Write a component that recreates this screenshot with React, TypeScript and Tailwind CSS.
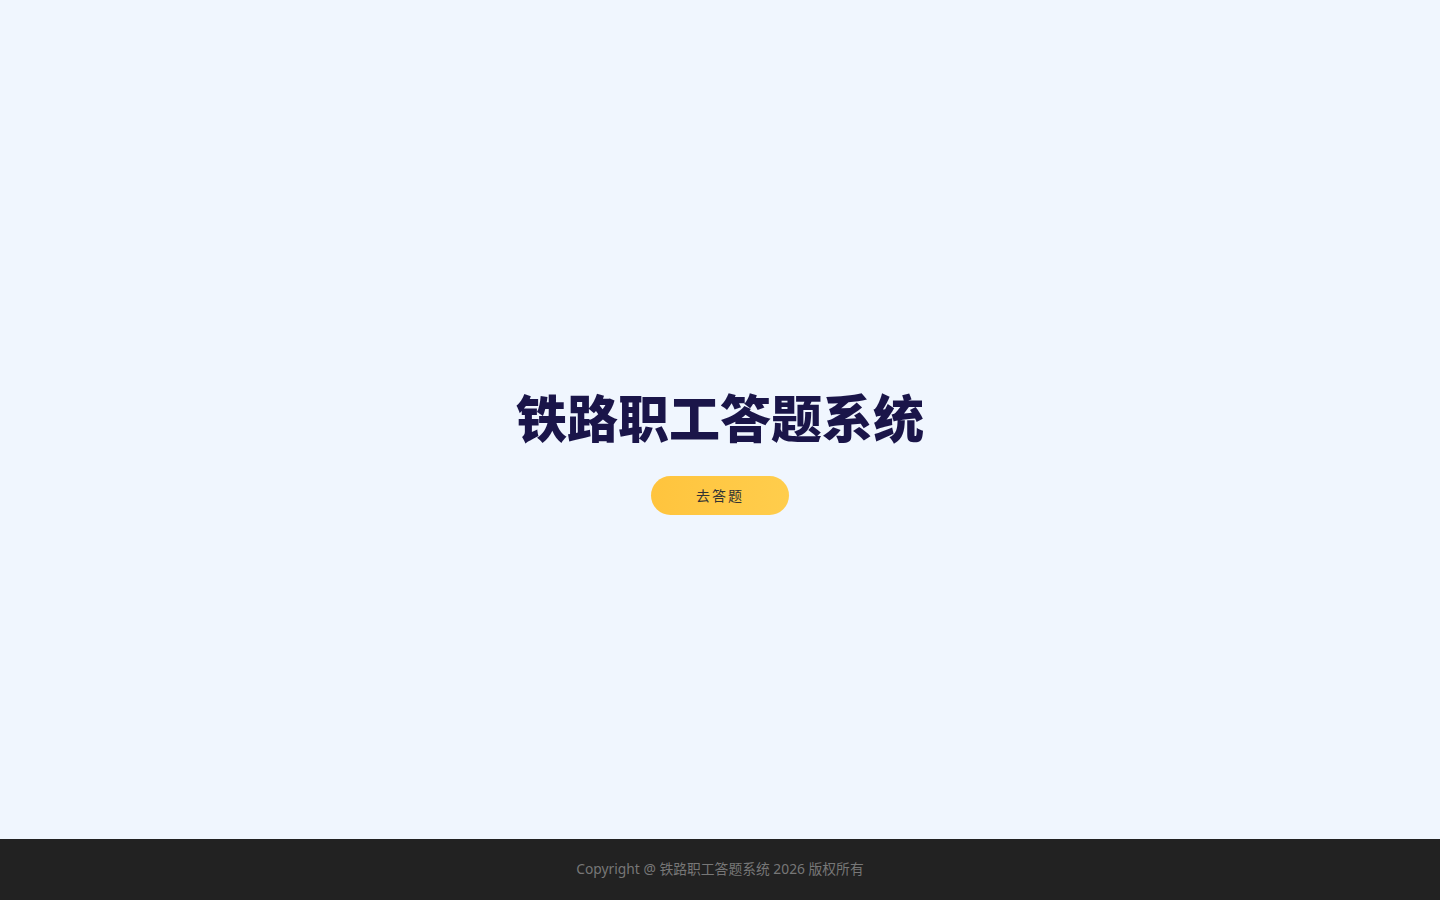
import React from "react";

export default function App() {
  const font = { fontFamily: '"Noto Sans", "Noto Sans CJK SC", sans-serif' };
  return (
    <div className="flex h-screen w-full flex-col bg-[#f0f6fe]" style={font}>
      <main className="flex flex-1 flex-col items-center justify-center pt-[54px]">
        <h1 className="text-[51px] font-black leading-[75px] text-[#1a1549] [font-family:'Noto_Sans_CJK_SC',sans-serif]">
          铁路职工答题系统
        </h1>
        <button className="mt-[22px] flex h-[39px] w-[138px] items-center justify-center rounded-full bg-gradient-to-r from-[#ffc43d] to-[#ffcd4c] text-[14px] tracking-[2px] text-[#333] [font-family:'Noto_Sans_CJK_SC',sans-serif]">
          去答题
        </button>
      </main>
      <footer className="flex h-[61px] items-center justify-center bg-[#222222] text-[13.8px] text-[#777777]">
        Copyright @ 铁路职工答题系统 2026 版权所有
      </footer>
    </div>
  );
}
